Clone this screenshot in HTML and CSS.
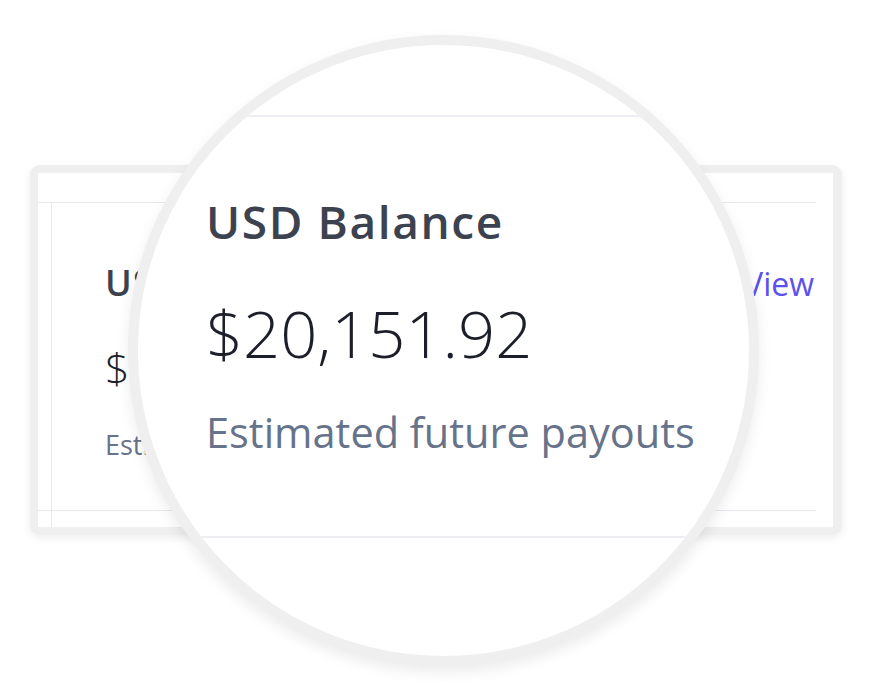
FILE: index.html
```html
<!doctype html>
<html lang="en">
<head>
  <meta charset="UTF-8">
  <meta name="viewport" content="width=device-width, initial-scale=1.0">

  <title>USD Balance</title>

  <link rel="stylesheet" href="styles.css">
</head>

<body>
  <main class="stage">
    <!-- the balance card, as it sits on the page -->
    <section class="card">
      <div class="panel">
        <div class="frame">
          <div class="balance">
            <div class="balance-head">
              <h2 class="balance-title">USD Balance</h2>
              <a class="balance-link" href="#">View</a>
            </div>
            <p class="balance-amount">$20,151.92</p>
            <p class="balance-note">Estimated future payouts</p>
          </div>
        </div>
      </div>
    </section>

    <!-- magnifier over the card -->
    <div class="lens">
      <div class="lens-frame">
        <h2 class="lens-title">USD Balance</h2>
        <p class="lens-amount">$20,151.92</p>
        <p class="lens-note">Estimated future payouts</p>
      </div>
    </div>
  </main>
</body>
</html>
```

FILE: styles.css
```css
*{
  box-sizing: border-box;
}

body{
  margin: 0;
  color: #1c1f2a;
  font-family: "Open Sans", "Noto Sans", sans-serif;
  background-color: #fff;
}

h2, p{
  margin: 0;
  line-height: 1;
}

.stage{
  position: relative;
  height: 699px;
  overflow: hidden;
}

/* card */

.card{
  margin: 165px 0 0 30px;
  padding: 8px 9px 8px 8px;
  width: 812px;
  height: 370px;
  background: #efefef;
  border-radius: 10px;
  box-shadow: 0 3px 8px rgba(0, 0, 0, .07);
}

.panel{
  position: relative;
  padding-top: 29px;
  height: 100%;
  background: #fff;
}

.panel::before{
  content: "";
  position: absolute;
  top: 29px;
  bottom: 0;
  left: 13px;
  width: 1px;
  background: #e7e9ee;
}

.frame{
  margin-right: 17px;
  padding: 59px 2px 0 67px;
  height: 309px;
  border-top: 1px solid #e7e9ee;
  border-bottom: 1px solid #e7e9ee;
}

.balance-head{
  display: flex;
  align-items: baseline;
  justify-content: space-between;
}

.balance-title{
  color: #3d4250;
  font-size: 36px;
  font-weight: 600;
  letter-spacing: 1px;
}

.balance-link{
  color: #5b50f0;
  font-size: 32px;
  font-weight: 500;
  text-decoration: none;
}

.balance-amount{
  margin-top: 41px;
  font-size: 43px;
  font-weight: 300;
}

.balance-note{
  margin-top: 42px;
  color: #66738a;
  font-size: 27px;
}

/* lens */

.lens{
  position: absolute;
  top: 35px;
  left: 128px;
  width: 631px;
  height: 631px;
  overflow: hidden;
  background: #fff;
  border: 10px solid #efefef;
  border-radius: 50%;
  box-shadow: 0 6px 14px rgba(0, 0, 0, .08);
}

.lens-frame{
  margin-top: 70px;
  padding: 81px 0 0 68px;
  height: 423px;
  border-top: 2px solid #eceef2;
  border-bottom: 2px solid #eceef2;
}

.lens-title{
  color: #3d4250;
  font-size: 46px;
  font-weight: 600;
  letter-spacing: 1.6px;
}

.lens-amount{
  margin-top: 57px;
  font-size: 65px;
  font-weight: 300;
}

.lens-note{
  margin-top: 46px;
  color: #66738a;
  font-size: 41.5px;
}
```
